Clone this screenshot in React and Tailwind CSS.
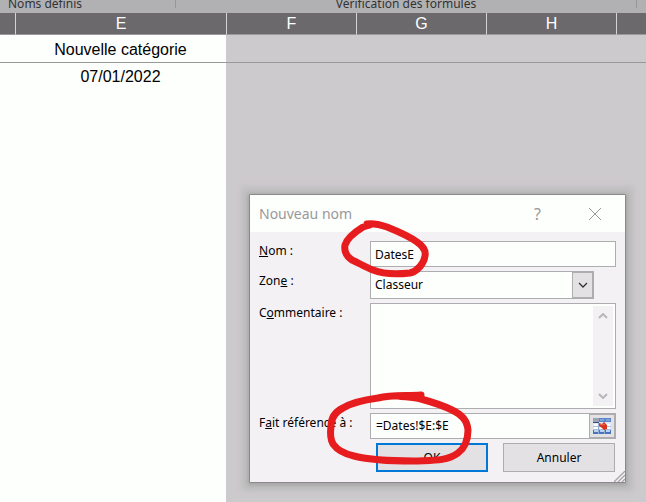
import React from 'react';

const COLUMNS = ['E', 'F', 'G', 'H'];

function Chevron({ up, className }) {
  return (
    <svg viewBox="0 0 10 6" width="10" height="6" fill="none" stroke="currentColor" className={className} aria-hidden="true">
      <path d={up ? 'M1 5 L5 1 L9 5' : 'M1 1 L5 5 L9 1'} />
    </svg>
  );
}

function RangeIcon() {
  return (
    <svg viewBox="0 0 18 16" width="18" height="16" shapeRendering="crispEdges" aria-hidden="true">
      <rect width="18" height="16" fill="#dfe9f6" />
      <rect width="18" height="4" fill="#5d86c8" />
      <rect width="6" height="4" fill="#9aa3b3" />
      <rect y="4" width="6" height="1" fill="#3d4f74" />
      <path d="M7 1h4v2h-4zM13 1h4v2h-4z" fill="#7fa4dc" />
      <path d="M1 6h4v2h-4zM1 9h4v2h-4zM13 6h4v2h-4zM13 9h4v2h-4zM7 9h4v2h-4zM7 6h4v2h-4z" fill="#fff" />
      <path d="M0 8.5H18M0 11.5H18" stroke="#a9bfe0" />
      <rect y="12" width="18" height="4" fill="#4a74ba" />
      <path d="M1 12h4v2h-4zM7 12h4v2h-4zM13 12h4v2h-4z" fill="#b9d2f2" />
      <path d="M5.5 5V16M11.5 4V16" stroke="#8fadd9" />
      <path d="M6 5L9 6L11 4L14 7V11L11 12L9 10L6 8Z" fill="#d6341c" shapeRendering="auto" />
      <path d="M7 6L10 7L12 6" fill="none" stroke="#ee7553" shapeRendering="auto" />
    </svg>
  );
}

function Sheet() {
  return (
    <table className="h-[calc(100vh-13px)] w-full table-fixed border-separate border-spacing-0 text-center font-['Liberation_Sans',sans-serif] text-base leading-5 text-black">
      <colgroup>
        <col className="w-[15px]" />
        <col className="w-[211px]" />
        <col className="w-[130px]" />
        <col className="w-[130px]" />
        <col className="w-[130px]" />
        <col />
      </colgroup>
      <thead>
        <tr className="h-[22px] bg-[#6b696b] text-white">
          <td className="border-b border-[#9a989a] p-0" />
          {COLUMNS.map(col => (
            <th key={col} scope="col" className="border-b border-l border-b-[#9a989a] border-l-[#d4d2d4] p-0 pt-px font-normal">{col}</th>
          ))}
          <td className="border-b border-l border-b-[#9a989a] border-l-[#d4d2d4] p-0" />
        </tr>
      </thead>
      <tbody>
        <tr className="h-7">
          <td className="border-b border-[#9a989a] bg-[#fdfffc] p-0" />
          <td className="border-b border-[#9a989a] bg-[#fdfffc] p-0 pt-0.5">Nouvelle catégorie</td>
          <td colSpan={4} className="border-b border-[#9a989a] p-0" />
        </tr>
        <tr className="align-top">
          <td className="bg-[#fdfffc] p-0" />
          <td className="bg-[#fdfffc] p-0 pt-1">07/01/2022</td>
          <td colSpan={4} className="p-0" />
        </tr>
      </tbody>
    </table>
  );
}

function NameDialog() {
  return (
    <div role="dialog" aria-labelledby="dialog-title" className="absolute top-[194px] left-[249px] w-[377px] rounded-[1px] border border-[#8a888a] bg-[#f4f1f5] text-xs text-black shadow-[0_1px_3px_1px_#a8a8a8,0_1px_5px_4px_#b8b8b8,0_0_5px_9px_#c4c3c4]">
      <div className="flex h-[37px] items-center bg-[#fdfffc] pl-[9px] text-[#9a989a]">
        <h1 id="dialog-title" className="flex-1 text-sm">Nouveau nom</h1>
        <button type="button" aria-label="Aide" className="w-[53px] text-base">?</button>
        <button type="button" aria-label="Fermer" className="flex w-[61px] justify-center">
          <svg viewBox="0 0 12 12" width="12" height="12" stroke="currentColor" aria-hidden="true">
            <path d="M0 0L12 12M12 0L0 12" />
          </svg>
        </button>
      </div>

      <form className="px-[9px] pt-[9px] pb-[10px]">
        <div className="grid grid-cols-[111px_1fr] gap-y-1 leading-5">
          <label htmlFor="name"><u>N</u>om :</label>
          <input id="name" type="text" defaultValue="DatesE" className="h-[26px] w-full border border-[#adadb0] bg-[#fdfffc] px-1" />

          <label htmlFor="scope">Zon<u>e</u> :</label>
          <div className="relative w-56">
            <select id="scope" className="block h-7 w-full appearance-none border border-[#adadb0] bg-[#fdfffc] px-1">
              <option>Classeur</option>
            </select>
            <span className="pointer-events-none absolute inset-y-0 right-0 flex w-[22px] items-center justify-center border border-t-2 border-r-2 border-b-2 border-[#adadb0] bg-[#e4e1e5] text-[#333]">
              <Chevron className="stroke-[1.3]" />
            </span>
          </div>

          <label htmlFor="comment">C<u>o</u>mmentaire :</label>
          <div className="flex h-[106px] border border-[#adadb0] bg-[#fdfffc] p-0.5">
            <textarea id="comment" className="flex-1 resize-none" />
            <div className="flex w-5 flex-col items-center justify-between bg-[#f4f1f5] py-[7px] text-[#b8b6b9]">
              <Chevron up className="stroke-2" />
              <Chevron className="stroke-2" />
            </div>
          </div>

          <label htmlFor="refers">F<u>a</u>it référence à :</label>
          <div className="flex h-[26px] border border-[#adadb0] bg-[#fdfffc]">
            <input id="refers" type="text" defaultValue="=Dates!$E:$E" className="min-w-0 flex-1 px-[5px]" />
            <button type="button" aria-label="Sélectionner la plage" className="flex w-[26px] items-center justify-center border border-[#adadb0] bg-[#e4e1e5]">
              <RangeIcon />
            </button>
          </div>
        </div>

        <div className="mt-1 flex justify-end gap-[15px] pr-px">
          <button type="button" className="h-[29px] w-28 border-2 border-[#0078d7] bg-[#e4e1e5]">OK</button>
          <button type="button" className="h-[29px] w-28 border border-[#adadb0] bg-[#e4e1e5]">Annuler</button>
        </div>
      </form>

      <svg viewBox="0 0 11 11" width="11" height="11" stroke="#a5a3a6" strokeWidth="1.3" className="absolute right-0 bottom-0" aria-hidden="true">
        <path d="M0 11L11 0M4 11L11 4M8 11L11 8" />
      </svg>
    </div>
  );
}

// hand-drawn marks over the dialog
function Marks() {
  return (
    <svg viewBox="0 0 150 250" width="150" height="250" fill="none" stroke="#e61c1e" strokeWidth="7" strokeLinecap="round" strokeLinejoin="round" className="pointer-events-none absolute top-[215px] left-[325px]" aria-hidden="true">
      <path d="M42 9C49 8 56 10 62 12C72 16 84 21 92 27C98 31 101 36 100 41C99 48 93 56 85 58C76 59 60 60 48 55C40 52 34 48 27 45C21 41 19 36 20 30C22 23 30 17 38 12L45 10" />
      <path d="M96 180C80 181 66 180 53 183C38 185 26 188 18 193C10 197 6 203 6 211C5 219 5 224 8 229C13 236 20 239 29 241C45 245 70 246 88 246C105 245 121 247 133 238C141 232 143 224 143 215C142 205 137 200 127 195C117 190 107 187 96 184C88 182 80 182 73 181" />
    </svg>
  );
}

export default function App() {
  return (
    <div className="relative min-h-screen overflow-hidden bg-[#cdcacd] font-['Noto_Sans',sans-serif]">
      <div className="flex h-[13px] bg-[#b1b1b3] text-xs leading-[8px] text-[#333]">
        <span className="h-2 w-44 border-r border-[#969698] pl-2">Noms définis</span>
        <span className="mr-[9px] h-2 flex-1 border-r border-[#969698] text-center">Vérification des formules</span>
      </div>
      <Sheet />
      <NameDialog />
      <Marks />
    </div>
  );
}
